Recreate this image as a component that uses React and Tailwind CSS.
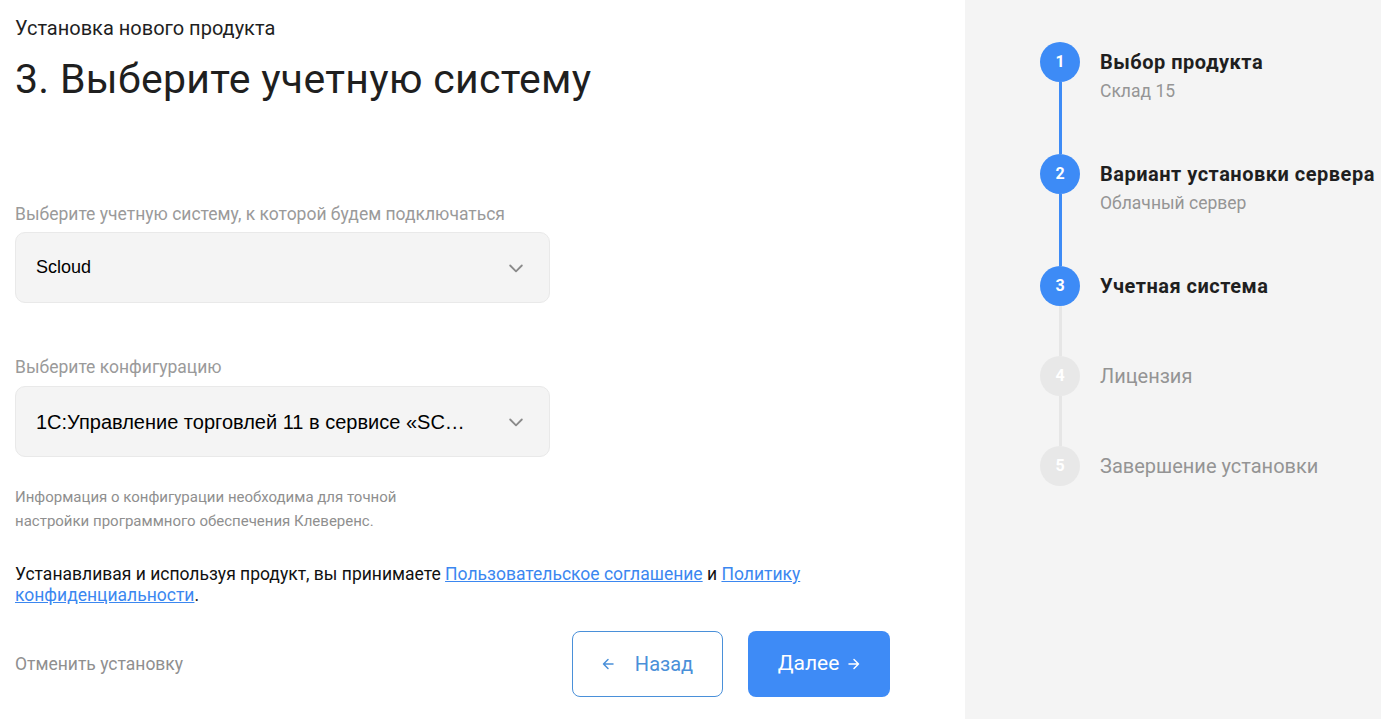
import React from 'react';

const steps = [
  { n: 1, title: 'Выбор продукта', sub: 'Склад 15', state: 'done' },
  { n: 2, title: 'Вариант установки сервера', sub: 'Облачный сервер', state: 'done' },
  { n: 3, title: 'Учетная система', state: 'active' },
  { n: 4, title: 'Лицензия', state: 'todo' },
  { n: 5, title: 'Завершение установки', state: 'todo' },
];

function Chevron() {
  return (
    <svg width="20" height="20" viewBox="0 0 24 24" fill="none" stroke="#8a8a8a" strokeWidth="2.2" strokeLinecap="round" strokeLinejoin="round">
      <path d="M5 9l7 7 7-7" />
    </svg>
  );
}

function Arrow({ left }) {
  return (
    <svg width="12" height="12" viewBox="0 0 12 12" fill="none" stroke="currentColor" strokeWidth="1.5" strokeLinecap="round" strokeLinejoin="round">
      {left ? <path d="M11 6H1.5M6 1.5L1.5 6 6 10.5" /> : <path d="M1 6h9.5M6 1.5L10.5 6 6 10.5" />}
    </svg>
  );
}

function Select({ value, size }) {
  return (
    <div className="flex items-center justify-between w-[535px] h-[71px] pl-[20px] pr-[23px] rounded-[10px] bg-[#f4f4f4] border border-[#e9e9e9]">
      <span className={`${size} text-black truncate font-['Liberation_Sans',Arial,sans-serif]`}>{value}</span>
      <Chevron />
    </div>
  );
}

function Step({ step, last }) {
  const done = step.state !== 'todo';
  const lineBlue = step.state === 'done';
  const h = step.n <= 2 ? 'h-[112px]' : 'h-[90px]';
  return (
    <div className={`flex gap-[20px] ${last ? '' : h}`}>
      <div className="flex flex-col items-center w-[40px]">
        <div className={`w-[40px] h-[40px] shrink-0 rounded-full flex items-center justify-center text-white font-bold text-[16px] ${done ? 'bg-[#3d8bf6]' : 'bg-[#e8e8e8]'}`}>
          {step.n}
        </div>
        {!last && <div className={`w-[3px] flex-1 ${lineBlue ? 'bg-[#3d8bf6]' : 'bg-[#e6e6e6]'}`} />}
      </div>
      <div className="pt-[9px]">
        <div className={`text-[20px] leading-[22px] whitespace-nowrap ${done ? 'font-bold text-[#1f1f1f] tracking-[0.5px]' : 'text-[#949494]'}`}>{step.title}</div>
        {step.sub && <div className="text-[17.5px] leading-[20px] mt-[8px] text-[#959595]">{step.sub}</div>}
      </div>
    </div>
  );
}

export default function App() {
  return (
    <div className="flex w-[1381px] h-[719px] bg-white font-['Roboto',sans-serif] overflow-hidden">
      <div className="w-[965px] shrink-0 pl-[15px] pr-[75px] pt-[16px]">
        <div className="text-[20px] leading-[24px] text-[#1f1f1f]">Установка нового продукта</div>
        <h1 className="text-[41px] leading-[48px] mt-[15px] text-[#1f1f1f] tracking-[0.3px]">3. Выберите учетную систему</h1>

        <div className="mt-[100px] text-[17.5px] leading-[22px] text-[#9a9a9a]">Выберите учетную систему, к которой будем подключаться</div>
        <div className="mt-[7px]"><Select value="Scloud" size="text-[18px]" /></div>

        <div className="mt-[53px] text-[17.5px] leading-[22px] text-[#9a9a9a]">Выберите конфигурацию</div>
        <div className="mt-[8px]"><Select value="1С:Управление торговлей 11 в сервисе «SC…" size="text-[20px]" /></div>

        <p className="mt-[28px] text-[15px] leading-[24px] text-[#8f8f8f] w-[400px]">
          Информация о конфигурации необходима для точной настройки программного обеспечения Клеверенс.
        </p>

        <p className="mt-[31px] text-[17.5px] leading-[21px] text-[#111]">
          Устанавливая и используя продукт, вы принимаете{' '}
          <a href="#" className="text-[#3b87f0] underline">Пользовательское соглашение</a> и{' '}
          <a href="#" className="text-[#3b87f0] underline">Политику конфиденциальности</a>.
        </p>

        <div className="mt-[25px] flex items-center">
          <div className="flex-1 text-[17.5px] text-[#8f8f8f]">Отменить установку</div>
          <button className="w-[151px] h-[66px] rounded-[8px] border border-[#4a90d9] text-[#4a90d9] text-[20px] flex items-center justify-center gap-[21px] bg-white">
            <Arrow left />
            <span>Назад</span>
          </button>
          <button className="ml-[25px] w-[142px] h-[66px] rounded-[8px] bg-[#3e8bf6] text-white text-[21px] flex items-center justify-center gap-[9px]">
            <span>Далее</span>
            <Arrow />
          </button>
        </div>
      </div>

      <div className="flex-1 bg-[#f4f4f4] pt-[42px] pl-[75px]">
        {steps.map((s, i) => (
          <Step key={s.n} step={s} last={i === steps.length - 1} />
        ))}
      </div>
    </div>
  );
}
